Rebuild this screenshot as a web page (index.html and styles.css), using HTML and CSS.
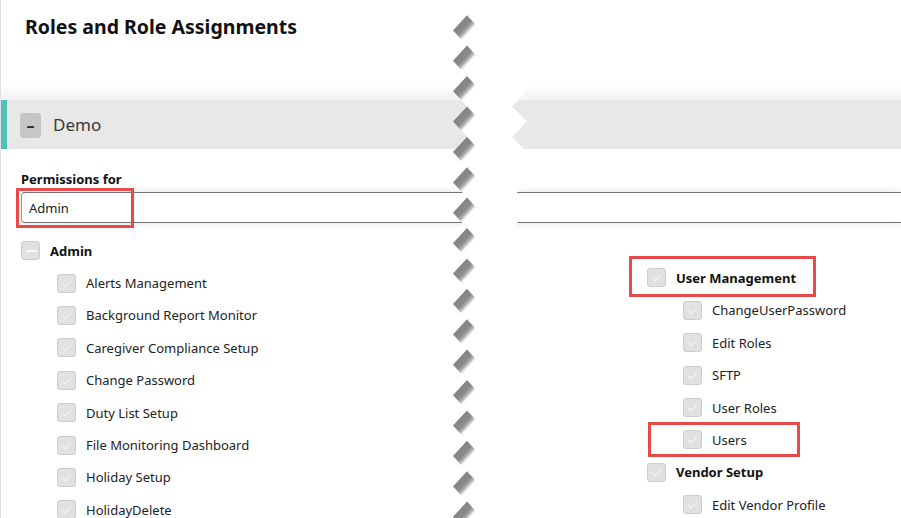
FILE: index.html
```html
<!DOCTYPE html>
<html lang="en">

<head>
  <meta charset="UTF-8">
  <meta name="viewport" content="width=device-width, initial-scale=1.0">
  <title>Roles and Role Assignments</title>
  <link rel="stylesheet" href="styles.css">
</head>

<body>
  <div class="page">
    <header class="page-head">
      <h1>Roles and Role Assignments</h1>
    </header>

    <section class="role">
      <div class="role-bar">
        <button class="role-toggle" type="button">–</button>
        <span class="role-name">Demo</span>
      </div>

      <div class="role-body">
        <label class="field-label" for="perm-for">Permissions for</label>
        <div class="field">
          <input id="perm-for" type="text" value="Admin">
          <span class="mark mark-field"></span>
        </div>

        <div class="perm-cols">
          <ul class="perm-tree">
            <li class="perm-group">
              <div class="perm-row"><span class="check check-part"></span>Admin</div>
              <ul class="perm-items">
                <li class="perm-row"><span class="check"></span>Alerts Management</li>
                <li class="perm-row"><span class="check"></span>Background Report Monitor</li>
                <li class="perm-row"><span class="check"></span>Caregiver Compliance Setup</li>
                <li class="perm-row"><span class="check"></span>Change Password</li>
                <li class="perm-row"><span class="check"></span>Duty List Setup</li>
                <li class="perm-row"><span class="check"></span>File Monitoring Dashboard</li>
                <li class="perm-row"><span class="check"></span>Holiday Setup</li>
                <li class="perm-row"><span class="check"></span>HolidayDelete</li>
              </ul>
            </li>
          </ul>

          <ul class="perm-tree perm-tree-right">
            <li class="perm-group">
              <div class="perm-row"><span class="check"></span>User Management<span class="mark mark-group"></span></div>
              <ul class="perm-items">
                <li class="perm-row"><span class="check"></span>ChangeUserPassword</li>
                <li class="perm-row"><span class="check"></span>Edit Roles</li>
                <li class="perm-row"><span class="check"></span>SFTP</li>
                <li class="perm-row"><span class="check"></span>User Roles</li>
                <li class="perm-row"><span class="check"></span>Users<span class="mark mark-item"></span></li>
              </ul>
            </li>
            <li class="perm-group">
              <div class="perm-row"><span class="check"></span>Vendor Setup</div>
              <ul class="perm-items">
                <li class="perm-row"><span class="check"></span>Edit Vendor Profile</li>
              </ul>
            </li>
          </ul>
        </div>
      </div>
    </section>

    <!-- torn edge between the two halves of the page -->
    <svg class="tear" viewBox="0 0 100 518" width="100" height="518" aria-hidden="true">
      <defs>
        <linearGradient id="tear-shade" gradientUnits="userSpaceOnUse" x1="19" y1="-7.6" x2="29.3" y2="1.9">
          <stop offset="0" stop-color="#838383" />
          <stop offset="0.5" stop-color="#8b8b8b" />
          <stop offset="0.75" stop-color="#bcbcbc" />
          <stop offset="1" stop-color="#ffffff" stop-opacity="0" />
        </linearGradient>
        <polygon id="tooth" points="26,-15.2 12,0 22,10.9 36,-4.3" fill="url(#tear-shade)" />
      </defs>
      <polygon fill="#fff" points="12,0 26,15.2 12,30.4 26,45.6 12,60.8 26,76 12,91.2 26,106.4 12,121.6 26,136.8 12,152 26,167.2 12,182.4 26,197.6 12,212.8 26,228 12,243.2 26,258.4 12,273.6 26,288.8 12,304 26,319.2 12,334.4 26,349.6 12,364.8 26,380 12,395.2 26,410.4 12,425.6 26,440.8 12,456 26,471.2 12,486.4 26,501.6 12,516.8 26,532
        71,532 86,516.8 71,501.6 86,486.4 71,471.2 86,456 71,440.8 86,425.6 71,410.4 86,395.2 71,380 86,364.8 71,349.6 86,334.4 71,319.2 86,304 71,288.8 86,273.6 71,258.4 86,243.2 71,228 86,212.8 71,197.6 86,182.4 71,167.2 86,152 71,136.8 86,121.6 71,106.4 86,91.2 71,76 86,60.8 71,45.6 86,30.4 71,15.2 86,0" />
      <use href="#tooth" y="30.4" />
      <use href="#tooth" y="60.8" />
      <use href="#tooth" y="91.2" />
      <use href="#tooth" y="121.6" />
      <use href="#tooth" y="152" />
      <use href="#tooth" y="182.4" />
      <use href="#tooth" y="212.8" />
      <use href="#tooth" y="243.2" />
      <use href="#tooth" y="273.6" />
      <use href="#tooth" y="304" />
      <use href="#tooth" y="334.4" />
      <use href="#tooth" y="364.8" />
      <use href="#tooth" y="395.2" />
      <use href="#tooth" y="425.6" />
      <use href="#tooth" y="456" />
      <use href="#tooth" y="486.4" />
      <use href="#tooth" y="516.8" />
    </svg>
  </div>
</body>

</html>
```

FILE: styles.css
```css
html {
  box-sizing: border-box;
  font-family: "Noto Sans", "Open Sans", sans-serif;
  font-size: 13px;
  color: #222;
}

*,
*:before,
*:after {
  box-sizing: inherit;
}

body {
  margin: 0;
  overflow: hidden;
  background-color: #fff;
}

.page {
  position: relative;
  min-height: 518px;
  border-left: 1px solid #dfdfe8;
}

/* header */
.page-head {
  height: 100px;
  padding: 14px 24px 0;
  background: linear-gradient(to bottom, #fff 86px, #f5f5f7 94px, #f3f3f5 100px);
}

.page-head h1 {
  margin: 0;
  font-size: 19.5px;
  line-height: 26px;
  font-weight: bold;
  color: #111;
}

/* role bar */
.role-bar {
  display: flex;
  align-items: center;
  gap: 12px;
  height: 49px;
  padding-left: 13px;
  border-left: 6px solid #4ec2b2;
  background-color: #e8e8e8;
}

.role-toggle {
  width: 21px;
  height: 25px;
  margin-top: 1px;
  padding: 0;
  border: 0;
  border-radius: 3px;
  background-color: #c6c6c6;
  color: #2a2a2a;
  font: bold 16px/25px "Noto Sans", sans-serif;
}

.role-name {
  font-size: 17px;
  color: #383838;
}

.role-body {
  padding: 21px 0 0 20px;
}

/* permissions for */
.field-label {
  display: block;
  font-weight: bold;
  line-height: 18px;
  color: #111;
}

/* the field runs on past the right edge of the window */
.field {
  position: relative;
  margin-top: 4px;
}

.field input {
  display: block;
  width: 100%;
  height: 31px;
  padding: 0 7px;
  border: 1px solid #747474;
  border-left-color: #9a9a9a;
  border-right: 0;
  border-radius: 4px 0 0 4px;
  box-shadow: 0 0 8px rgba(0, 0, 0, 0.12);
  font: 13px "Noto Sans", sans-serif;
  color: #222;
}

/* red call-outs */
.mark {
  position: absolute;
  border: 3px solid #e84a4a;
  pointer-events: none;
}

.mark-field {
  left: -5px;
  top: -4px;
  width: 118px;
  height: 40px;
}

.mark-group {
  left: -18px;
  top: -6px;
  width: 187px;
  height: 41px;
}

.mark-item {
  left: -35px;
  top: -2px;
  width: 152px;
  height: 35px;
}

/* permission tree */
.perm-cols {
  display: grid;
  grid-template-columns: 626px 1fr;
  margin-top: 11.5px;
}

.perm-tree,
.perm-items {
  list-style: none;
  margin: 0;
  padding: 0;
}

.perm-items {
  padding-left: 36px;
}

.perm-tree-right {
  padding-top: 27.3px;
}

.perm-row {
  position: relative;
  display: flex;
  align-items: center;
  height: 32.4px;
  white-space: nowrap;
}

.perm-group>.perm-row {
  font-weight: bold;
  color: #111;
}

.check {
  position: relative;
  flex: none;
  width: 19px;
  height: 19px;
  margin-right: 10px;
  border: 1px solid #cdcdcd;
  border-radius: 3px;
  background-color: #e1e1e1;
}

.check:after {
  content: "";
  position: absolute;
  left: 6px;
  top: 3px;
  width: 5px;
  height: 9px;
  border: solid #f7f7f7;
  border-width: 0 1.5px 1.5px 0;
  transform: rotate(45deg);
}

.check-part:after {
  left: 3.5px;
  top: 8px;
  width: 11px;
  height: 2px;
  border: 0;
  background-color: #fbfbfb;
  transform: none;
}

.tear {
  position: absolute;
  left: 440px;
  top: 0;
}
```
